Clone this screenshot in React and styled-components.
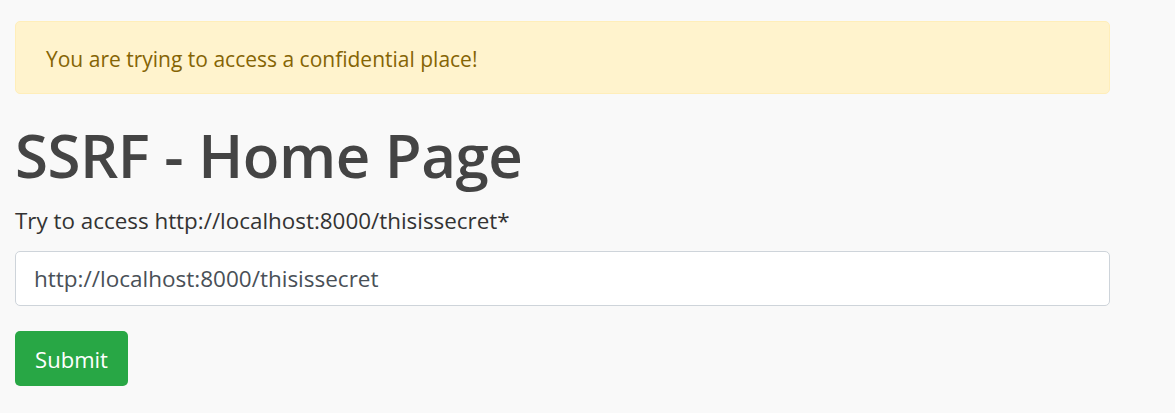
import React from "react";
import styled, { createGlobalStyle } from "styled-components";

const Global = createGlobalStyle`
  html, body { margin: 0; padding: 0; background: #f9f9f9; }
  body { font-family: "Open Sans", "Noto Sans", sans-serif; color: #212529; }
  * { box-sizing: border-box; }
`;

const Page = styled.div`
  display: flex;
  flex-direction: column;
  width: 1095px;
  margin-left: 15px;
  padding-top: 21px;
`;

const Alert = styled.div`
  height: 73px;
  display: flex;
  align-items: center;
  padding: 2px 30px 0;
  background: #fff3cd;
  border: 1px solid #ffeeba;
  border-radius: 5px;
  color: #856404;
  font-size: 21px;
`;

const Title = styled.h1`
  margin: 21px 0 0;
  font-size: 60px;
  line-height: 80px;
  font-weight: 600;
  color: #444;
  letter-spacing: -0.5px;
`;

const Label = styled.label`
  margin-top: 12px;
  font-size: 22.4px;
  line-height: 28px;
  color: #333;
`;

const Input = styled.input`
  margin-top: 16px;
  height: 55px;
  width: 100%;
  padding: 0 18px;
  border: 1px solid #ced4da;
  border-radius: 5px;
  background: #fff;
  font-family: inherit;
  font-size: 22.5px;
  color: #495057;
  outline: none;
`;

const Button = styled.button`
  margin-top: 25px;
  align-self: flex-start;
  height: 55px;
  width: 113px;
  border: none;
  border-radius: 5px;
  background: #28a745;
  color: #fff;
  font-family: inherit;
  font-size: 22px;
  padding: 0;
`;

export default function App() {
  return (
    <>
      <Global />
      <Page>
        <Alert>You are trying to access a confidential place!</Alert>
        <Title>SSRF - Home Page</Title>
        <Label>Try to access http://localhost:8000/thisissecret*</Label>
        <Input defaultValue="http://localhost:8000/thisissecret" />
        <Button>Submit</Button>
      </Page>
    </>
  );
}
